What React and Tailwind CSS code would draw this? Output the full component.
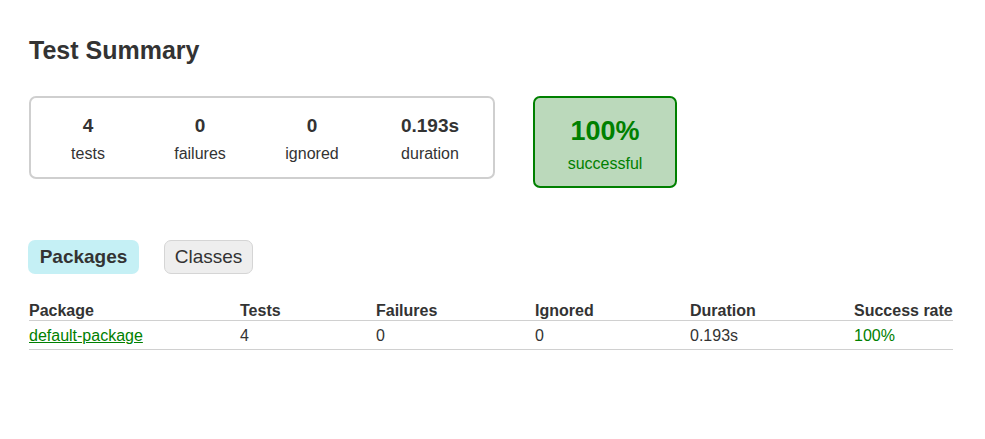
import React from 'react'

const counters = [
  { value: '4', label: 'tests', w: 'w-[110px]' },
  { value: '0', label: 'failures', w: 'w-[110px]' },
  { value: '0', label: 'ignored', w: 'w-[110px]' },
  { value: '0.193s', label: 'duration', w: 'w-[122px]' },
]

const columns = ['Package', 'Tests', 'Failures', 'Ignored', 'Duration', 'Success rate']

const App = () => {
  return (
    <div
      className="min-h-[439px] bg-white text-[#333] px-[29px] pt-[35px]"
      style={{ fontFamily: '"Liberation Sans", Arial, sans-serif' }}
    >
      <h1 className="text-[25px] leading-[30px] font-bold">Test Summary</h1>

      {/* summary */}
      <div className="flex items-start gap-[38px] mt-[31px]">
        <div className="flex gap-[2px] p-[2px] border-2 border-[#cfcfcf] rounded-[7px]">
          {counters.map(c => (
            <div key={c.label} className={`${c.w} pt-[15px] pb-[11px] text-center`}>
              <div className="text-[19px] leading-[22px] font-bold">{c.value}</div>
              <div className="text-[16px] leading-[20px] mt-[7px]">{c.label}</div>
            </div>
          ))}
        </div>
        <div className="w-[144px] h-[92px] border-2 border-[#008000] bg-[#bbd9bb] rounded-[7px] text-[#008000] text-center pt-[17px]">
          <div className="text-[27px] leading-[32px] font-bold">100%</div>
          <div className="text-[16px] leading-[20px] mt-[7px]">successful</div>
        </div>
      </div>

      {/* tabs */}
      <div className="flex items-center gap-[25px] mt-[52px] -ml-px">
        <div className="w-[111px] h-[34px] flex items-center justify-center rounded-[7px] bg-[#c5f0f5] text-[19px] font-bold">
          Packages
        </div>
        <div className="w-[89px] h-[34px] flex items-center justify-center rounded-[7px] bg-[#eeeeee] border border-[#d5d5d5] text-[19px]">
          Classes
        </div>
      </div>

      {/* table */}
      <div className="w-[924px] mt-[26px] text-[16px]">
        <div className="grid grid-cols-[211px_136px_159px_155px_164px_99px] border-b border-[#d0d0d0] font-bold leading-[19px] pt-[1px]">
          {columns.map(col => (
            <div key={col}>{col}</div>
          ))}
        </div>
        <div className="grid grid-cols-[211px_136px_159px_155px_164px_99px] border-b border-[#d0d0d0] leading-[20px] pt-[5px] pb-[3px]">
          <div>
            <a href="#" className="text-[#008000] underline">default-package</a>
          </div>
          <div>4</div>
          <div>0</div>
          <div>0</div>
          <div>0.193s</div>
          <div className="text-[#008000]">100%</div>
        </div>
      </div>
    </div>
  )
}

export default App
